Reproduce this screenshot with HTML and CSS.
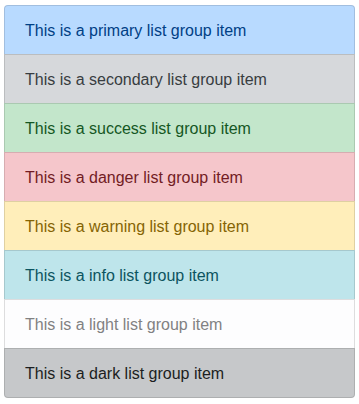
FILE: index.html
```html
<!DOCTYPE html>
<html lang="en">
<head>
    <meta charset="UTF-8">
    <meta name="viewport" content="width=device-width, initial-scale=1.0">
    <title>List group</title>
    <link rel="stylesheet" href="styles.css">
</head>
<body>
    <ul class="list-group">
        <li class="list-group-item item-primary">This is a primary list group item</li>
        <li class="list-group-item item-secondary">This is a secondary list group item</li>
        <li class="list-group-item item-success">This is a success list group item</li>
        <li class="list-group-item item-danger">This is a danger list group item</li>
        <li class="list-group-item item-warning">This is a warning list group item</li>
        <li class="list-group-item item-info">This is a info list group item</li>
        <li class="list-group-item item-light">This is a light list group item</li>
        <li class="list-group-item item-dark">This is a dark list group item</li>
    </ul>
</body>
</html>
```

FILE: styles.css
```css
/* Basic Styles */
body {
    font-family: "Liberation Sans", Arial, sans-serif;
    font-size: 16px;
    line-height: 1.5;
    margin: 0;
    padding: 5px 4px;
    background-color: #fff;
}

.list-group {
    list-style: none;
    margin: 0;
    padding: 0;
    display: flex;
    flex-direction: column;
}

.list-group-item {
    padding: 13px 20px 11px;
    border: 1px solid rgba(0, 0, 0, 0.125);
    margin-bottom: -1px;
}

.list-group-item:first-child {
    border-top-left-radius: 4px;
    border-top-right-radius: 4px;
}

.list-group-item:last-child {
    margin-bottom: 0;
    border-bottom-left-radius: 4px;
    border-bottom-right-radius: 4px;
}

.item-primary { background-color: #b8daff; color: #004085; }
.item-secondary { background-color: #d6d8db; color: #383d41; }
.item-success { background-color: #c3e6cb; color: #155724; }
.item-danger { background-color: #f5c6cb; color: #721c24; }
.item-warning { background-color: #ffeeba; color: #856404; }
.item-info { background-color: #bee5eb; color: #0c5460; }
.item-light { background-color: #fdfdfe; color: #818182; }
.item-dark { background-color: #c6c8ca; color: #1b1e21; }
```
